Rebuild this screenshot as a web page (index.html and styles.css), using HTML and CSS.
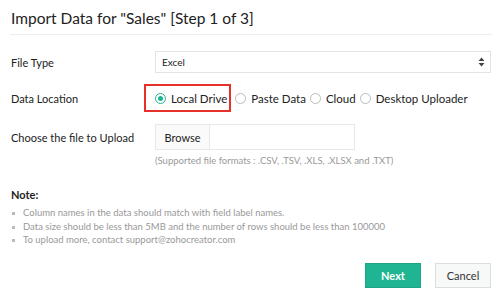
FILE: index.html
```html
<!DOCTYPE html>
<html lang="en">
<head>
    <meta charset="UTF-8">
    <title>Import Data</title>
    <link rel="stylesheet" href="styles.css">
</head>
<body>
    <div class="dialog">
        <h1 class="title">Import Data for "Sales" [Step 1 of 3]</h1>
        <div class="form">
            <div class="row row-type">
                <label class="label">File Type</label>
                <div class="select">
                    <span>Excel</span>
                    <svg class="arrows" width="7" height="10" viewBox="0 0 7 10">
                        <path d="M0.5 4 L3.5 0.5 L6.5 4 Z" fill="#444"/>
                        <path d="M0.5 6 L3.5 9.5 L6.5 6 Z" fill="#444"/>
                    </svg>
                </div>
            </div>
            <div class="row row-location">
                <label class="label">Data Location</label>
                <div class="radios">
                    <div class="radio-wrap selected">
                        <span class="radio on"></span><span>Local Drive</span>
                    </div>
                    <div class="radio-wrap">
                        <span class="radio"></span><span>Paste Data</span>
                    </div>
                    <div class="radio-wrap">
                        <span class="radio"></span><span>Cloud</span>
                    </div>
                    <div class="radio-wrap">
                        <span class="radio"></span><span>Desktop Uploader</span>
                    </div>
                </div>
            </div>
            <div class="row row-file">
                <label class="label">Choose the file to Upload</label>
                <div class="file">
                    <span class="browse">Browse</span>
                </div>
            </div>
            <p class="hint">(Supported file formats : .CSV, .TSV, .XLS, .XLSX and .TXT)</p>
        </div>
        <div class="note">
            <h4>Note:</h4>
            <ul>
                <li>Column names in the data should match with field label names.</li>
                <li>Data size should be less than 5MB and the number of rows should be less than 100000</li>
                <li>To upload more, contact support@zohocreator.com</li>
            </ul>
        </div>
        <div class="actions">
            <button class="btn btn-next">Next</button>
            <button class="btn btn-cancel">Cancel</button>
        </div>
    </div>
</body>
</html>
```

FILE: styles.css
```css
body {
    margin: 0;
    font-family: Lato, "Open Sans", sans-serif;
    color: #222;
    background: #fff;
}
.dialog {
    width: 500px;
    height: 300px;
    padding: 0 9px 0 11px;
    box-sizing: border-box;
}
.title {
    margin: 0 -1px;
    padding: 8px 1px 0;
    height: 26px;
    font-size: 15.5px;
    font-weight: normal;
    line-height: 20px;
    border-bottom: 1px solid #eee;
    box-sizing: content-box;
}
.form {
    padding-top: 16px;
}
.row {
    display: flex;
    align-items: center;
}
.label {
    width: 144px;
    font-size: 11px;
}
.row-type {
    height: 22px;
}
.select {
    flex: 1;
    height: 22px;
    box-sizing: border-box;
    border: 1px solid #e3e3e3;
    display: flex;
    align-items: center;
    justify-content: space-between;
    padding: 0 5px 0 6px;
    font-size: 10px;
}
.row-location {
    margin-top: 11px;
    height: 28px;
}
.radios {
    display: flex;
    align-items: center;
    margin-left: -11px;
    font-size: 11.5px;
    white-space: nowrap;
}
.radio-wrap {
    display: flex;
    align-items: center;
    height: 28px;
    margin-right: 4px;
}
.radio-wrap.selected {
    border: 2px solid #e8302b;
    box-sizing: border-box;
    padding: 0 2px 0 9px;
}
.radio {
    flex: none;
    width: 9px;
    height: 9px;
    border: 1px solid #bbb;
    border-radius: 50%;
    margin-right: 5px;
    position: relative;
}
.radio.on {
    border-color: #1fb592;
}
.radio.on::after {
    content: "";
    position: absolute;
    left: 2px;
    top: 2px;
    width: 5px;
    height: 5px;
    border-radius: 50%;
    background: #1fb592;
}
.row-file {
    margin-top: 12px;
    height: 26px;
}
.file {
    width: 200px;
    height: 26px;
    border: 1px solid #e8e8e8;
    box-sizing: border-box;
    display: flex;
}
.browse {
    width: 53px;
    border-right: 1px solid #e8e8e8;
    background: #fafafa;
    font-size: 11px;
    display: flex;
    align-items: center;
    justify-content: center;
}
.hint {
    margin: 5px 0 0 144px;
    font-size: 9.5px;
    color: #999;
}
.note {
    margin-top: 22px;
}
.note h4 {
    margin: 0;
    font-size: 11px;
}
.note ul {
    list-style: none;
    margin: 5px 0 0;
    padding: 0;
}
.note li {
    font-size: 9.5px;
    color: #999;
    line-height: 13.5px;
    padding-left: 12px;
    position: relative;
}
.note li::before {
    content: "";
    position: absolute;
    left: 1px;
    top: 6px;
    width: 3px;
    height: 3px;
    background: #bbb;
}
.actions {
    display: flex;
    justify-content: flex-end;
    margin-top: 16px;
}
.btn {
    width: 56px;
    height: 25px;
    font-family: inherit;
    font-size: 11px;
    cursor: pointer;
}
.btn-next {
    background: #1fb592;
    border: 1px solid #1aa584;
    color: #fff;
    font-weight: bold;
    margin-right: 14px;
}
.btn-cancel {
    background: #f7f8f8;
    border: 1px solid #ddd;
    color: #333;
}
```
